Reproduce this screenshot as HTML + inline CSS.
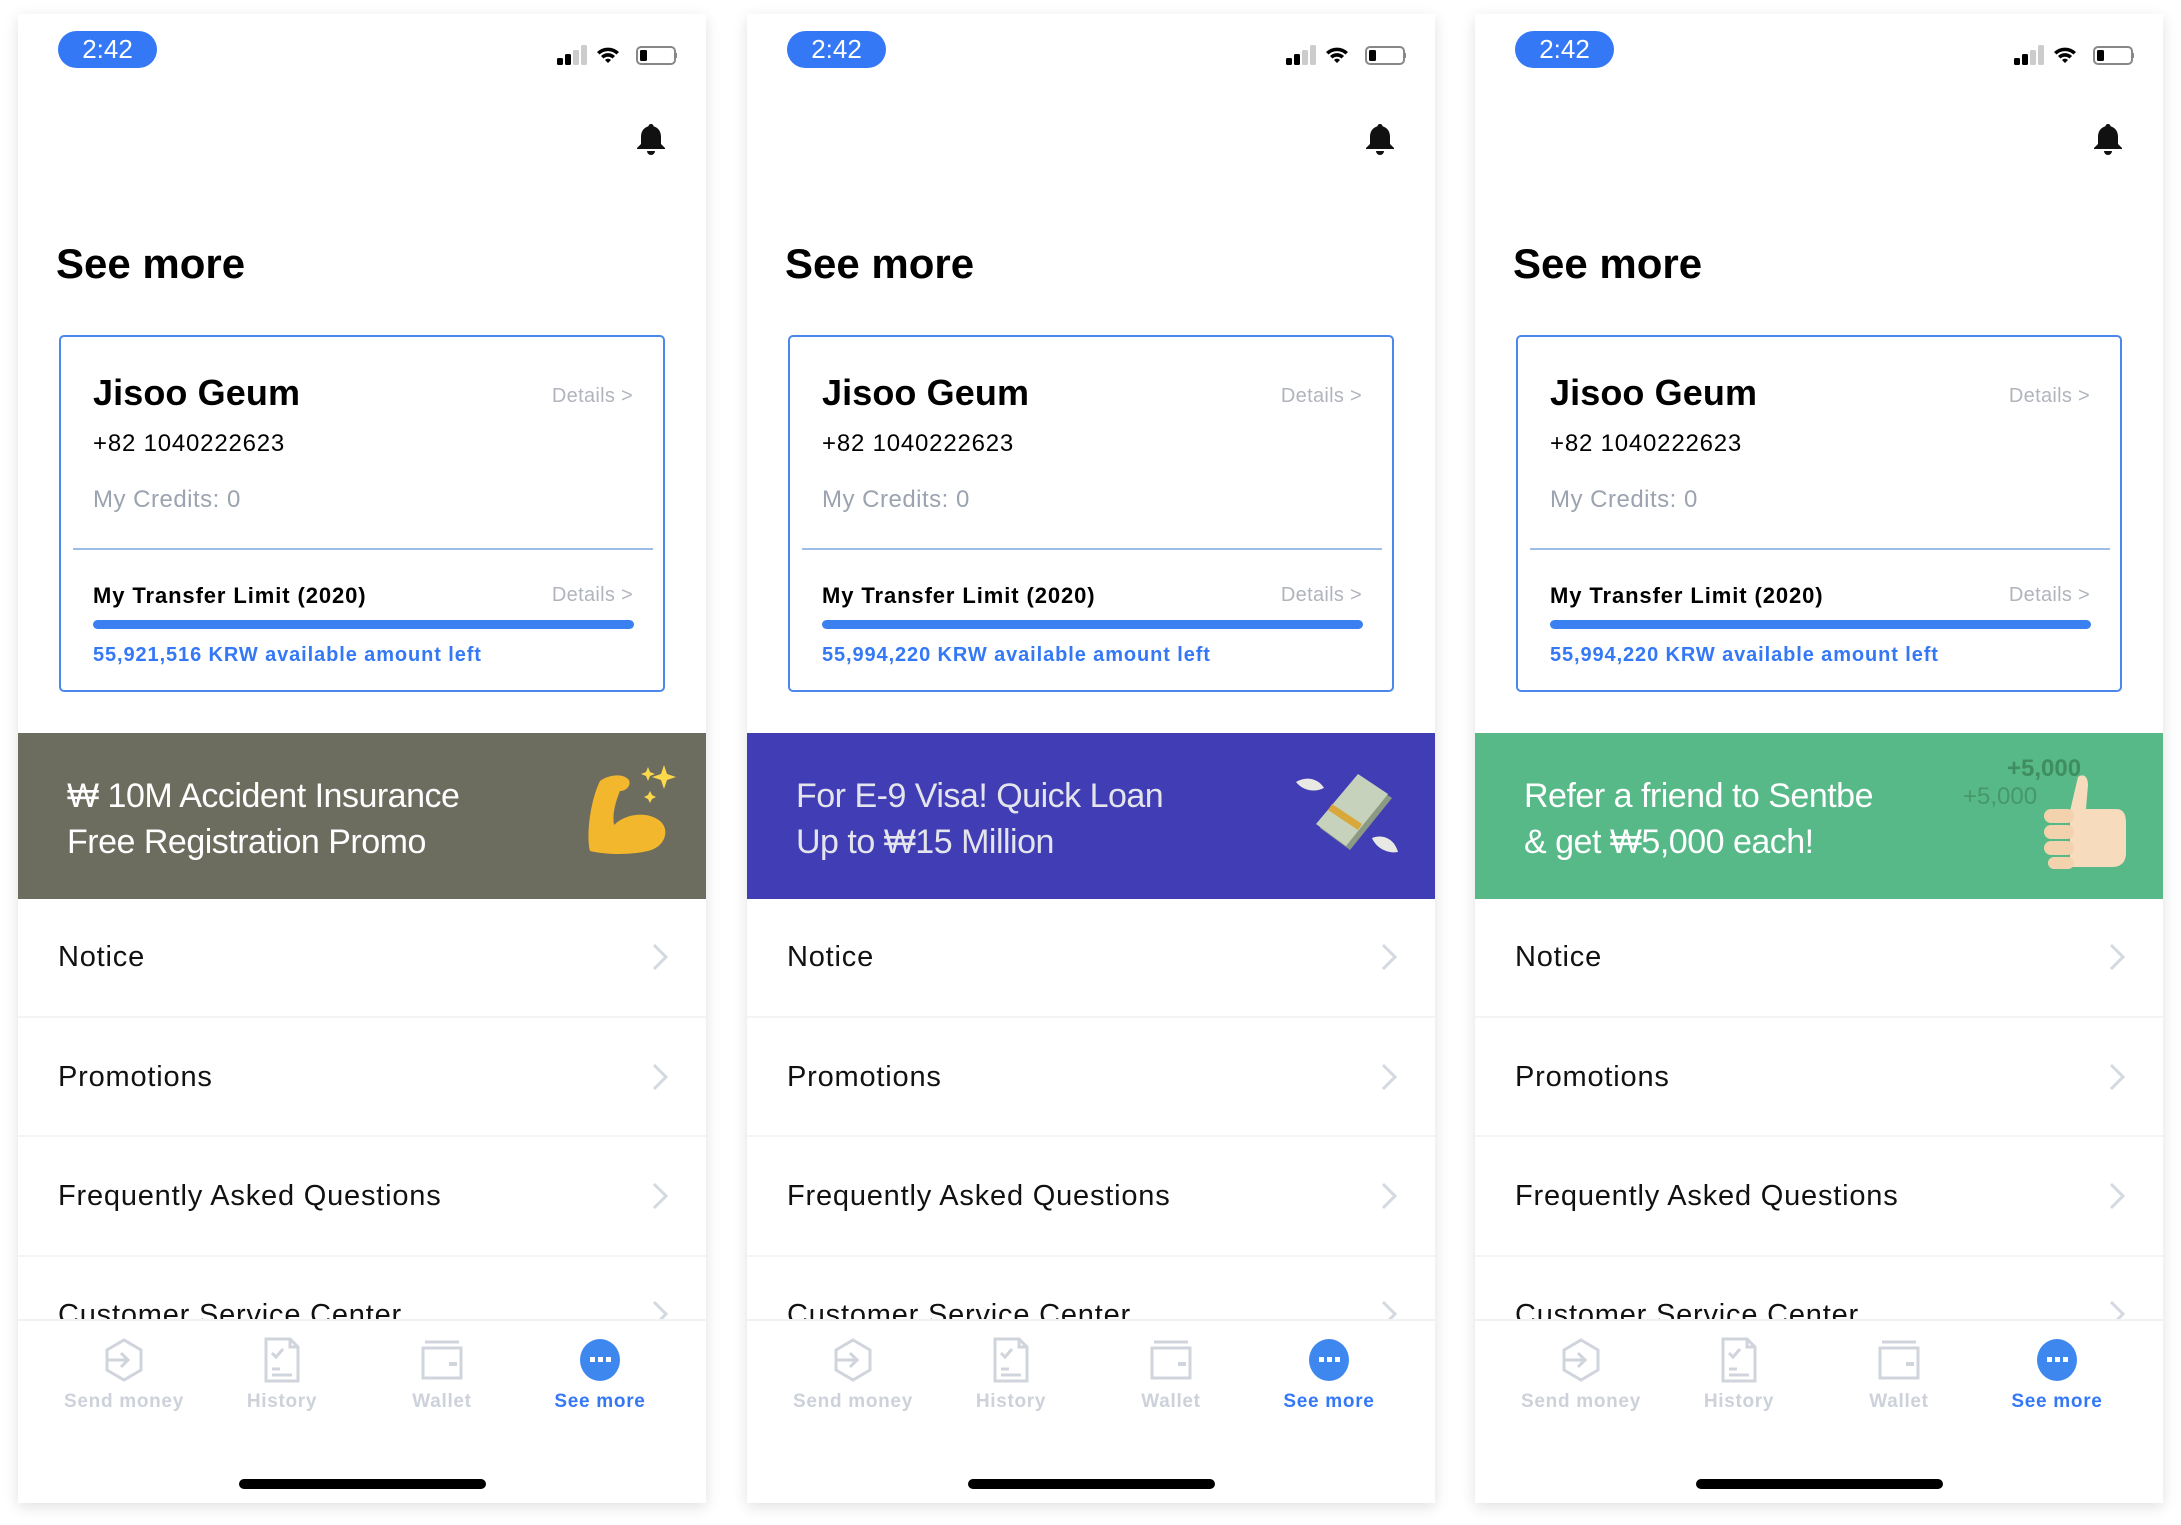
<!DOCTYPE html>
<html><head><meta charset="utf-8"><style>
*{margin:0;padding:0;box-sizing:border-box}
body{width:2181px;height:1525px;background:#fff;position:relative;overflow:hidden;font-family:"Liberation Sans","Noto Sans CJK KR",sans-serif}
.ph{position:absolute;top:14px;width:688px;height:1489px;background:#fff;box-shadow:0 4px 14px rgba(0,0,0,.12);overflow:hidden}
.a{position:absolute}
.pill{left:40px;top:17px;width:99px;height:37px;border-radius:19px;background:#3478f6;color:#fff;font-size:26px;text-align:center;line-height:37px}
.title{left:38px;top:228px;font-size:42px;font-weight:bold;color:#000;line-height:44px}
.card{left:41px;top:321px;width:606px;height:357px;border:2px solid #4a88ec;border-radius:5px}
.name{left:32px;top:36px;font-size:36px;font-weight:bold;line-height:40px;letter-spacing:.1px}
.det{right:30px;font-size:20px;color:#b0b4bc;line-height:24px;letter-spacing:.3px}
.phn{left:32px;top:93px;font-size:24px;line-height:28px;letter-spacing:.8px}
.cr{left:32px;top:149px;font-size:24px;color:#9ca3b0;line-height:28px;letter-spacing:.5px}
.div{left:12px;top:211px;width:580px;height:2px;background:#9dbde9}
.tl{left:32px;top:246px;font-size:22px;font-weight:bold;line-height:26px;letter-spacing:.9px}
.bar{left:32px;top:283px;width:541px;height:9px;border-radius:5px;background:#3a80f0}
.bl{left:32px;top:306px;font-size:20px;font-weight:bold;color:#3478f6;line-height:24px;letter-spacing:.9px}
.ban{left:0;top:719px;width:688px;height:166px}
.bt{left:49px;top:40px;font-size:34px;color:#fff;line-height:46px;letter-spacing:-.5px}
.row{left:40px;font-size:29px;color:#111;line-height:32px;letter-spacing:.8px}
.sep{left:0;width:688px;height:2px;background:#f3f4f6}
.chev{left:632px;width:20px;height:30px}
.tab{top:1305px;left:0;width:688px;height:184px;background:#fff;border-top:2px solid #f1f2f4}
.lab{top:70px;width:180px;margin-left:-90px;text-align:center;font-size:19px;font-weight:bold;color:#cdd1da;line-height:22px;letter-spacing:.7px}
.home{left:221px;top:1465px;width:247px;height:10px;border-radius:5px;background:#000}
</style></head><body>

<div class="ph" style="left:18px">
<div class="a pill">2:42</div>
<svg class="a" style="left:539px;top:31px" width="120" height="22" viewBox="0 0 120 22">
<rect x="0" y="13" width="6" height="7" rx="1.5" fill="#000"/><rect x="8" y="9" width="6" height="11" rx="1.5" fill="#000"/><rect x="16" y="5" width="6" height="15" rx="1.5" fill="#ccc"/><rect x="24" y="0" width="6" height="20" rx="1.5" fill="#ccc"/>
<path d="M40 7a16 16 0 0 1 22 0l-2.5 2.5a12.5 12.5 0 0 0-17 0zM44 11a10 10 0 0 1 14 0l-2.5 2.5a6.5 6.5 0 0 0-9 0zM48 15a4 4 0 0 1 6 0l-3 3z" fill="#000"/>
<rect x="80" y="2" width="38" height="17" rx="4" fill="none" stroke="#888" stroke-width="2"/><rect x="83" y="5" width="7" height="11" rx="1.5" fill="#000"/><rect x="119" y="8" width="2" height="5" fill="#888"/>
</svg>
<svg class="a" style="left:618px;top:109px" width="30" height="33" viewBox="0 0 30 33"><path d="M15 1c-1.5 0-2.5 1-2.5 2.3C7 5 5 9 5 14v7l-4 4v1h28v-1l-4-4v-7c0-5-2-9-7.5-10.7C17.5 2 16.5 1 15 1z" fill="#111"/><path d="M11 28h8a4 4 0 0 1-8 0z" fill="#111"/></svg>
<div class="a title">See more</div>
<div class="a card">
<div class="a name">Jisoo Geum</div><div class="a det" style="top:47px">Details &gt;</div>
<div class="a phn">+82 1040222623</div>
<div class="a cr">My Credits: 0</div>
<div class="a div"></div>
<div class="a tl">My Transfer Limit (2020)</div><div class="a det" style="top:246px">Details &gt;</div>
<div class="a bar"></div>
<div class="a bl">55,921,516 KRW available amount left</div>
</div>
<div class="a ban" style="background:#6c6c5f">
<div class="a bt">₩ 10M Accident Insurance<br>Free Registration Promo</div>
<svg class="a" style="left:560px;top:28px" width="110" height="110" viewBox="0 0 110 110">
<path d="M22 20c8-6 22-8 28-2 4 4 0 12-8 12-4 10-8 22-6 34 12-12 34-14 46-4 10 8 6 26-12 30-18 4-40 4-58 0-4-14 0-50 10-70z" fill="#f2b72c"/>
<path d="M86 4l3 9 9 3-9 3-3 9-3-9-9-3 9-3z" fill="#fcd94a"/><path d="M70 6l2 5 5 2-5 2-2 5-2-5-5-2 5-2z" fill="#fcd94a"/><path d="M72 30l2 4 4 2-4 2-2 4-2-4-4-2 4-2z" fill="#fcd94a"/>
</svg>
</div>
<div class="a row" style="top:927px">Notice</div>
<div class="a sep" style="top:1002px"></div>
<div class="a row" style="top:1047px">Promotions</div>
<div class="a sep" style="top:1121px"></div>
<div class="a row" style="top:1166px">Frequently Asked Questions</div>
<div class="a sep" style="top:1241px"></div>
<div class="a row" style="top:1285px">Customer Service Center</div>
<svg class="a chev" style="top:928px" viewBox="0 0 20 30"><path d="M4 3l12 12-12 12" fill="none" stroke="#d4d8e0" stroke-width="3"/></svg>
<svg class="a chev" style="top:1048px" viewBox="0 0 20 30"><path d="M4 3l12 12-12 12" fill="none" stroke="#d4d8e0" stroke-width="3"/></svg>
<svg class="a chev" style="top:1167px" viewBox="0 0 20 30"><path d="M4 3l12 12-12 12" fill="none" stroke="#d4d8e0" stroke-width="3"/></svg>
<svg class="a chev" style="top:1285px" viewBox="0 0 20 30"><path d="M4 3l12 12-12 12" fill="none" stroke="#d4d8e0" stroke-width="3"/></svg>
<div class="a tab">
<svg class="a" style="left:86px;top:17px" width="40" height="44" viewBox="0 0 40 44"><path d="M20 2l17 10v20L20 42 3 32V12z" fill="none" stroke="#d0d4dc" stroke-width="3"/><path d="M4 22h20M17 15l7 7-7 7" fill="none" stroke="#d0d4dc" stroke-width="3"/></svg>
<svg class="a" style="left:246px;top:16px" width="36" height="46" viewBox="0 0 36 46"><path d="M2 2h24l8 8v34H2z" fill="none" stroke="#d0d4dc" stroke-width="3"/><path d="M26 2v8h8M8 16l4 4 7-8M8 32h8M8 38h20" fill="none" stroke="#d0d4dc" stroke-width="3"/></svg>
<svg class="a" style="left:403px;top:19px" width="42" height="40" viewBox="0 0 42 40"><path d="M2 8h38v30H2zM4 2h34" fill="none" stroke="#d0d4dc" stroke-width="3"/><rect x="28" y="22" width="8" height="4" fill="#d0d4dc"/></svg>
<svg class="a" style="left:561px;top:17px" width="42" height="44" viewBox="0 0 42 44"><ellipse cx="21" cy="22" rx="20" ry="21" fill="#3e87ee"/><rect x="11" y="19" width="5" height="5" fill="#fff"/><rect x="19" y="19" width="5" height="5" fill="#fff"/><rect x="27" y="19" width="5" height="5" fill="#fff"/></svg>
<div class="a lab" style="left:106px">Send money</div>
<div class="a lab" style="left:264px">History</div>
<div class="a lab" style="left:424px">Wallet</div>
<div class="a lab" style="left:582px;color:#3478f6">See more</div>
</div>
<div class="a home"></div>
</div>

<div class="ph" style="left:747px">
<div class="a pill">2:42</div>
<svg class="a" style="left:539px;top:31px" width="120" height="22" viewBox="0 0 120 22">
<rect x="0" y="13" width="6" height="7" rx="1.5" fill="#000"/><rect x="8" y="9" width="6" height="11" rx="1.5" fill="#000"/><rect x="16" y="5" width="6" height="15" rx="1.5" fill="#ccc"/><rect x="24" y="0" width="6" height="20" rx="1.5" fill="#ccc"/>
<path d="M40 7a16 16 0 0 1 22 0l-2.5 2.5a12.5 12.5 0 0 0-17 0zM44 11a10 10 0 0 1 14 0l-2.5 2.5a6.5 6.5 0 0 0-9 0zM48 15a4 4 0 0 1 6 0l-3 3z" fill="#000"/>
<rect x="80" y="2" width="38" height="17" rx="4" fill="none" stroke="#888" stroke-width="2"/><rect x="83" y="5" width="7" height="11" rx="1.5" fill="#000"/><rect x="119" y="8" width="2" height="5" fill="#888"/>
</svg>
<svg class="a" style="left:618px;top:109px" width="30" height="33" viewBox="0 0 30 33"><path d="M15 1c-1.5 0-2.5 1-2.5 2.3C7 5 5 9 5 14v7l-4 4v1h28v-1l-4-4v-7c0-5-2-9-7.5-10.7C17.5 2 16.5 1 15 1z" fill="#111"/><path d="M11 28h8a4 4 0 0 1-8 0z" fill="#111"/></svg>
<div class="a title">See more</div>
<div class="a card">
<div class="a name">Jisoo Geum</div><div class="a det" style="top:47px">Details &gt;</div>
<div class="a phn">+82 1040222623</div>
<div class="a cr">My Credits: 0</div>
<div class="a div"></div>
<div class="a tl">My Transfer Limit (2020)</div><div class="a det" style="top:246px">Details &gt;</div>
<div class="a bar"></div>
<div class="a bl">55,994,220 KRW available amount left</div>
</div>
<div class="a ban" style="background:#403db5">
<div class="a bt" style="color:#e4e4ec">For E-9 Visa! Quick Loan<br>Up to ₩15 Million</div>
<svg class="a" style="left:545px;top:35px" width="110" height="100" viewBox="0 0 110 100">
<path d="M4 14c10-6 22-4 28 6-8 4-20 4-28-6zM80 70c10-4 22 0 26 14-10 2-22-4-26-14z" fill="#e8e8e4"/>
<path d="M28 60L70 10l30 20-42 52z" fill="#8c9a84"/><path d="M24 56L66 6l30 20-42 52z" fill="#c7d2bd"/><path d="M36 42l30 20 4-6-30-20z" fill="#d9a83a"/>
</svg>
</div>
<div class="a row" style="top:927px">Notice</div>
<div class="a sep" style="top:1002px"></div>
<div class="a row" style="top:1047px">Promotions</div>
<div class="a sep" style="top:1121px"></div>
<div class="a row" style="top:1166px">Frequently Asked Questions</div>
<div class="a sep" style="top:1241px"></div>
<div class="a row" style="top:1285px">Customer Service Center</div>
<svg class="a chev" style="top:928px" viewBox="0 0 20 30"><path d="M4 3l12 12-12 12" fill="none" stroke="#d4d8e0" stroke-width="3"/></svg>
<svg class="a chev" style="top:1048px" viewBox="0 0 20 30"><path d="M4 3l12 12-12 12" fill="none" stroke="#d4d8e0" stroke-width="3"/></svg>
<svg class="a chev" style="top:1167px" viewBox="0 0 20 30"><path d="M4 3l12 12-12 12" fill="none" stroke="#d4d8e0" stroke-width="3"/></svg>
<svg class="a chev" style="top:1285px" viewBox="0 0 20 30"><path d="M4 3l12 12-12 12" fill="none" stroke="#d4d8e0" stroke-width="3"/></svg>
<div class="a tab">
<svg class="a" style="left:86px;top:17px" width="40" height="44" viewBox="0 0 40 44"><path d="M20 2l17 10v20L20 42 3 32V12z" fill="none" stroke="#d0d4dc" stroke-width="3"/><path d="M4 22h20M17 15l7 7-7 7" fill="none" stroke="#d0d4dc" stroke-width="3"/></svg>
<svg class="a" style="left:246px;top:16px" width="36" height="46" viewBox="0 0 36 46"><path d="M2 2h24l8 8v34H2z" fill="none" stroke="#d0d4dc" stroke-width="3"/><path d="M26 2v8h8M8 16l4 4 7-8M8 32h8M8 38h20" fill="none" stroke="#d0d4dc" stroke-width="3"/></svg>
<svg class="a" style="left:403px;top:19px" width="42" height="40" viewBox="0 0 42 40"><path d="M2 8h38v30H2zM4 2h34" fill="none" stroke="#d0d4dc" stroke-width="3"/><rect x="28" y="22" width="8" height="4" fill="#d0d4dc"/></svg>
<svg class="a" style="left:561px;top:17px" width="42" height="44" viewBox="0 0 42 44"><ellipse cx="21" cy="22" rx="20" ry="21" fill="#3e87ee"/><rect x="11" y="19" width="5" height="5" fill="#fff"/><rect x="19" y="19" width="5" height="5" fill="#fff"/><rect x="27" y="19" width="5" height="5" fill="#fff"/></svg>
<div class="a lab" style="left:106px">Send money</div>
<div class="a lab" style="left:264px">History</div>
<div class="a lab" style="left:424px">Wallet</div>
<div class="a lab" style="left:582px;color:#3478f6">See more</div>
</div>
<div class="a home"></div>
</div>

<div class="ph" style="left:1475px">
<div class="a pill">2:42</div>
<svg class="a" style="left:539px;top:31px" width="120" height="22" viewBox="0 0 120 22">
<rect x="0" y="13" width="6" height="7" rx="1.5" fill="#000"/><rect x="8" y="9" width="6" height="11" rx="1.5" fill="#000"/><rect x="16" y="5" width="6" height="15" rx="1.5" fill="#ccc"/><rect x="24" y="0" width="6" height="20" rx="1.5" fill="#ccc"/>
<path d="M40 7a16 16 0 0 1 22 0l-2.5 2.5a12.5 12.5 0 0 0-17 0zM44 11a10 10 0 0 1 14 0l-2.5 2.5a6.5 6.5 0 0 0-9 0zM48 15a4 4 0 0 1 6 0l-3 3z" fill="#000"/>
<rect x="80" y="2" width="38" height="17" rx="4" fill="none" stroke="#888" stroke-width="2"/><rect x="83" y="5" width="7" height="11" rx="1.5" fill="#000"/><rect x="119" y="8" width="2" height="5" fill="#888"/>
</svg>
<svg class="a" style="left:618px;top:109px" width="30" height="33" viewBox="0 0 30 33"><path d="M15 1c-1.5 0-2.5 1-2.5 2.3C7 5 5 9 5 14v7l-4 4v1h28v-1l-4-4v-7c0-5-2-9-7.5-10.7C17.5 2 16.5 1 15 1z" fill="#111"/><path d="M11 28h8a4 4 0 0 1-8 0z" fill="#111"/></svg>
<div class="a title">See more</div>
<div class="a card">
<div class="a name">Jisoo Geum</div><div class="a det" style="top:47px">Details &gt;</div>
<div class="a phn">+82 1040222623</div>
<div class="a cr">My Credits: 0</div>
<div class="a div"></div>
<div class="a tl">My Transfer Limit (2020)</div><div class="a det" style="top:246px">Details &gt;</div>
<div class="a bar"></div>
<div class="a bl">55,994,220 KRW available amount left</div>
</div>
<div class="a ban" style="background:#57b888">
<div class="a bt">Refer a friend to Sentbe<br>&amp; get ₩5,000 each!</div>
<div class="a" style="left:532px;top:22px;font-size:24px;font-weight:bold;color:#3f8d60">+5,000</div>
<div class="a" style="left:488px;top:50px;font-size:24px;color:#46986a">+5,000</div>
<svg class="a" style="left:565px;top:38px" width="90" height="100" viewBox="0 0 90 100">
<path d="M38 6c6-4 10 0 10 8l-2 24h30c8 0 10 6 10 14v30c0 10-6 14-14 14H30V40z" fill="#f6dcbc"/>
<rect x="4" y="38" width="30" height="14" rx="7" fill="#f3d2ae"/><rect x="4" y="54" width="30" height="14" rx="7" fill="#f3d2ae"/><rect x="4" y="70" width="30" height="14" rx="7" fill="#f3d2ae"/><rect x="8" y="86" width="26" height="12" rx="6" fill="#f3d2ae"/>
</svg>
</div>
<div class="a row" style="top:927px">Notice</div>
<div class="a sep" style="top:1002px"></div>
<div class="a row" style="top:1047px">Promotions</div>
<div class="a sep" style="top:1121px"></div>
<div class="a row" style="top:1166px">Frequently Asked Questions</div>
<div class="a sep" style="top:1241px"></div>
<div class="a row" style="top:1285px">Customer Service Center</div>
<svg class="a chev" style="top:928px" viewBox="0 0 20 30"><path d="M4 3l12 12-12 12" fill="none" stroke="#d4d8e0" stroke-width="3"/></svg>
<svg class="a chev" style="top:1048px" viewBox="0 0 20 30"><path d="M4 3l12 12-12 12" fill="none" stroke="#d4d8e0" stroke-width="3"/></svg>
<svg class="a chev" style="top:1167px" viewBox="0 0 20 30"><path d="M4 3l12 12-12 12" fill="none" stroke="#d4d8e0" stroke-width="3"/></svg>
<svg class="a chev" style="top:1285px" viewBox="0 0 20 30"><path d="M4 3l12 12-12 12" fill="none" stroke="#d4d8e0" stroke-width="3"/></svg>
<div class="a tab">
<svg class="a" style="left:86px;top:17px" width="40" height="44" viewBox="0 0 40 44"><path d="M20 2l17 10v20L20 42 3 32V12z" fill="none" stroke="#d0d4dc" stroke-width="3"/><path d="M4 22h20M17 15l7 7-7 7" fill="none" stroke="#d0d4dc" stroke-width="3"/></svg>
<svg class="a" style="left:246px;top:16px" width="36" height="46" viewBox="0 0 36 46"><path d="M2 2h24l8 8v34H2z" fill="none" stroke="#d0d4dc" stroke-width="3"/><path d="M26 2v8h8M8 16l4 4 7-8M8 32h8M8 38h20" fill="none" stroke="#d0d4dc" stroke-width="3"/></svg>
<svg class="a" style="left:403px;top:19px" width="42" height="40" viewBox="0 0 42 40"><path d="M2 8h38v30H2zM4 2h34" fill="none" stroke="#d0d4dc" stroke-width="3"/><rect x="28" y="22" width="8" height="4" fill="#d0d4dc"/></svg>
<svg class="a" style="left:561px;top:17px" width="42" height="44" viewBox="0 0 42 44"><ellipse cx="21" cy="22" rx="20" ry="21" fill="#3e87ee"/><rect x="11" y="19" width="5" height="5" fill="#fff"/><rect x="19" y="19" width="5" height="5" fill="#fff"/><rect x="27" y="19" width="5" height="5" fill="#fff"/></svg>
<div class="a lab" style="left:106px">Send money</div>
<div class="a lab" style="left:264px">History</div>
<div class="a lab" style="left:424px">Wallet</div>
<div class="a lab" style="left:582px;color:#3478f6">See more</div>
</div>
<div class="a home"></div>
</div>
</body></html>
